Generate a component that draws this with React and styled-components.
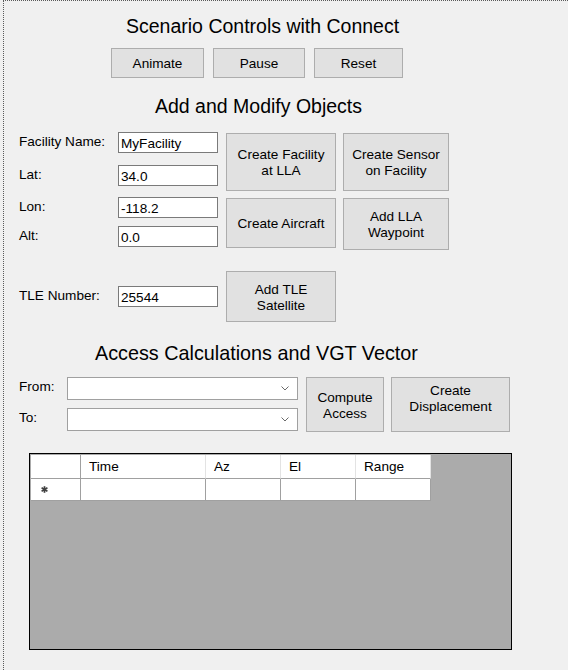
import React from 'react';
import styled, { createGlobalStyle } from 'styled-components';

const Global = createGlobalStyle`
  html, body { margin: 0; padding: 0; background: #f0f0f0; }
  body {
    font-family: "Liberation Sans", Arial, sans-serif;
    font-size: 13.6px;
    color: #000;
  }
  #root { min-height: 100vh; }
`;

const Panel = styled.div`
  box-sizing: border-box;
  margin-left: 3px;
  min-height: 100vh;
  border-top: 1px dotted #5a5a5a;
  border-left: 1px dotted #5a5a5a;
  padding-top: 14px;
  display: flex;
  flex-direction: column;
`;

const Title = styled.h2`
  margin: ${(p) => p.$mt || 0}px 0 0;
  padding-left: ${(p) => p.$left}px;
  font-size: ${(p) => p.$size || 19.5}px;
  font-weight: normal;
  line-height: 23px;
  white-space: nowrap;
`;

const ButtonRow = styled.div`
  display: flex;
  gap: 9px;
  margin-top: 10px;
  padding-left: 107px;
`;

const Btn = styled.button`
  box-sizing: border-box;
  flex: none;
  width: ${(p) => p.$w}px;
  height: ${(p) => p.$h}px;
  margin-top: ${(p) => p.$mt || 0}px;
  display: flex;
  align-items: center;
  justify-content: center;
  padding: 2px 2px ${(p) => p.$pb || 0}px;
  background: #e1e1e1;
  border: 1px solid #adadad;
  border-radius: 0;
  font-family: "Liberation Sans", Arial, sans-serif;
  font-size: 13.6px;
  line-height: 16px;
  color: #000;
  text-align: center;
  white-space: nowrap;
`;

const FormRow = styled.div`
  display: flex;
  align-items: ${(p) => p.$align || 'flex-start'};
  margin-top: ${(p) => p.$mt}px;
  padding-left: 15px;
`;

const Fields = styled.div`
  flex: none;
  display: flex;
  flex-direction: column;
  gap: ${(p) => p.$gap || 0}px;
`;

const Field = styled.div`
  display: flex;
  align-items: flex-start;
`;

const Label = styled.label`
  flex: none;
  width: ${(p) => p.$w}px;
  padding-top: ${(p) => p.$pt ?? 1.5}px;
  line-height: 15px;
  white-space: nowrap;
`;

const TextBox = styled.input`
  box-sizing: border-box;
  flex: none;
  width: 100px;
  height: 21px;
  margin: 0;
  padding: 2px 2px 0;
  border: 1px solid #7a7a7a;
  border-radius: 0;
  background: #fff;
  font-family: "Liberation Sans", Arial, sans-serif;
  font-size: 13.6px;
  color: #000;
  outline: none;
`;

const ButtonGroup = styled.div`
  display: flex;
  gap: 7px;
  margin-left: 8px;
`;

const Combo = styled.div`
  box-sizing: border-box;
  flex: none;
  width: 231px;
  height: 23px;
  display: flex;
  align-items: center;
  justify-content: flex-end;
  padding-right: 8px;
  background: #fff;
  border: 1px solid #a0a0a0;
`;

const Grid = styled.div`
  box-sizing: border-box;
  margin: 21px 0 0 25px;
  width: 483px;
  height: 197px;
  padding: 1px;
  border: 1px solid #000;
  background: #ababab;
`;

const Table = styled.div`
  display: grid;
  grid-template-columns: 50px 125px 75px 75px 75px;
  grid-template-rows: 24px 22px;
  width: max-content;
`;

const HeadCell = styled.div`
  box-sizing: border-box;
  background: #fff;
  border-right: 1px solid ${(p) => (p.$corner ? '#a0a0a0' : '#e3e3e3')};
  border-bottom: 1px solid #a0a0a0;
  padding-left: 8px;
  line-height: 23px;
  white-space: nowrap;
`;

const Cell = styled.div`
  box-sizing: border-box;
  background: #fff;
  border-right: 1px solid #a0a0a0;
  border-bottom: 1px solid #a0a0a0;
  display: flex;
  align-items: center;
  padding-left: ${(p) => (p.$rowHeader ? 10 : 0)}px;
`;

const Chevron = () => (
  <svg width="8" height="5" viewBox="0 0 8 5">
    <polyline points="0.5,0.5 4,4 7.5,0.5" fill="none" stroke="#6a6a6a" strokeWidth="1" />
  </svg>
);

const NewRowGlyph = () => (
  <svg width="7" height="7" viewBox="0 0 7 7">
    <g stroke="#404040" strokeWidth="1.7" strokeLinecap="butt">
      <line x1="3.5" y1="0.2" x2="3.5" y2="6.8" />
      <line x1="0.6" y1="1.8" x2="6.4" y2="5.2" />
      <line x1="0.6" y1="5.2" x2="6.4" y2="1.8" />
    </g>
  </svg>
);

export default function App() {
  return (
    <>
      <Global />
      <Panel>
        <Title $left={122}>Scenario Controls with Connect</Title>
        <ButtonRow>
          <Btn $w={93} $h={30}>Animate</Btn>
          <Btn $w={92} $h={30}>Pause</Btn>
          <Btn $w={89} $h={30}>Reset</Btn>
        </ButtonRow>

        <Title $mt={17} $left={151}>Add and Modify Objects</Title>

        <FormRow $mt={14}>
          <Fields $gap={12}>
            <Field>
              <Label $w={99}>Facility Name:</Label>
              <TextBox defaultValue="MyFacility" />
            </Field>
            <Field>
              <Label $w={99}>Lat:</Label>
              <TextBox defaultValue="34.0" />
            </Field>
          </Fields>
          <ButtonGroup>
            <Btn $w={110} $h={58} $mt={1}>Create Facility<br />at LLA</Btn>
            <Btn $w={106} $h={58} $mt={1}>Create Sensor<br />on Facility</Btn>
          </ButtonGroup>
        </FormRow>

        <FormRow $mt={6}>
          <Fields $gap={8}>
            <Field>
              <Label $w={99}>Lon:</Label>
              <TextBox defaultValue="-118.2" />
            </Field>
            <Field>
              <Label $w={99}>Alt:</Label>
              <TextBox defaultValue="0.0" />
            </Field>
          </Fields>
          <ButtonGroup>
            <Btn $w={110} $h={50} $mt={1}>Create Aircraft</Btn>
            <Btn $w={106} $h={52} $mt={1}>Add LLA<br />Waypoint</Btn>
          </ButtonGroup>
        </FormRow>

        <FormRow $mt={21} $align="center">
          <Fields>
            <Field>
              <Label $w={99}>TLE Number:</Label>
              <TextBox defaultValue="25544" />
            </Field>
          </Fields>
          <ButtonGroup>
            <Btn $w={110} $h={51}>Add TLE<br />Satellite</Btn>
          </ButtonGroup>
        </FormRow>

        <Title $mt={20} $left={91} $size={19.8}>Access Calculations and VGT Vector</Title>

        <FormRow $mt={12}>
          <Fields $gap={8}>
            <Field>
              <Label $w={48} $pt={1.5}>From:</Label>
              <Combo><Chevron /></Combo>
            </Field>
            <Field>
              <Label $w={48} $pt={1.5}>To:</Label>
              <Combo><Chevron /></Combo>
            </Field>
          </Fields>
          <ButtonGroup>
            <Btn $w={78} $h={55}>Compute<br />Access</Btn>
            <Btn $w={119} $h={55} $pb={14}>Create<br />Displacement</Btn>
          </ButtonGroup>
        </FormRow>

        <Grid>
          <Table>
            <HeadCell $corner />
            <HeadCell>Time</HeadCell>
            <HeadCell>Az</HeadCell>
            <HeadCell>El</HeadCell>
            <HeadCell>Range</HeadCell>
            <Cell $rowHeader><NewRowGlyph /></Cell>
            <Cell />
            <Cell />
            <Cell />
            <Cell />
          </Table>
        </Grid>
      </Panel>
    </>
  );
}
